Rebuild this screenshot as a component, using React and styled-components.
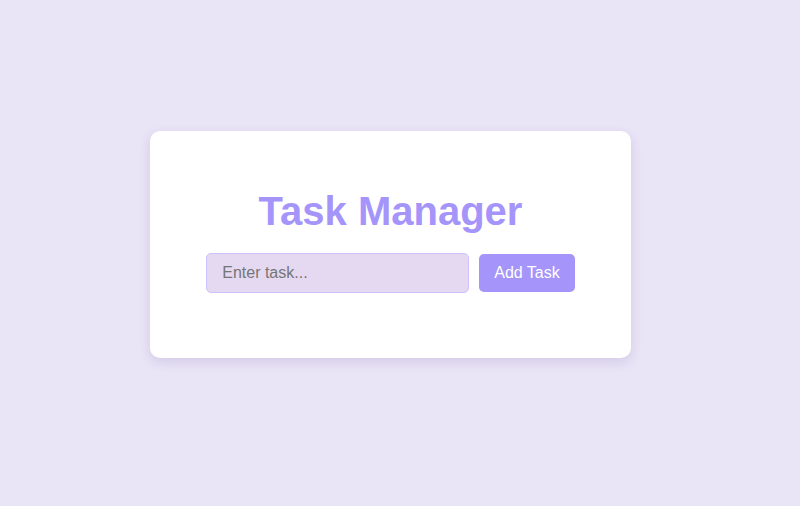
import React, { useState } from "react";
import styled, { createGlobalStyle } from "styled-components";

const GlobalStyle = createGlobalStyle`
  html, body {
    margin: 0;
    padding: 0;
    background: #e9e4f6;
    font-family: "Liberation Sans", Arial, sans-serif;
  }
  * { box-sizing: border-box; }
`;

const Page = styled.div`
  min-height: 100vh;
  display: flex;
  align-items: center;
  justify-content: center;
  padding: 0 19px 17px 0;
`;

const Card = styled.div`
  width: 481px;
  background: #ffffff;
  border-radius: 10px;
  box-shadow: 0 4px 12px rgba(80, 60, 140, 0.14);
  padding: 30px 30px 65px;
  display: flex;
  flex-direction: column;
  align-items: center;
`;

const Title = styled.h1`
  margin: 27px 0 19px;
  font-size: 40px;
  font-weight: 700;
  color: #a594f9;
  line-height: 46px;
`;

const Row = styled.div`
  display: flex;
  align-items: center;
  gap: 10px;
`;

const TaskInput = styled.input`
  width: 263px;
  height: 40px;
  padding: 10px 15px;
  border: 1px solid #cdc1ff;
  border-radius: 5px;
  background: #e5d9f2;
  font-family: "Liberation Sans", Arial, sans-serif;
  font-size: 16px;
  color: #333;
  outline: none;
  &::placeholder { color: #757575; }
`;

const AddButton = styled.button`
  height: 38px;
  padding: 10px 15px;
  border: none;
  border-radius: 5px;
  background: #a594f9;
  color: #ffffff;
  font-family: "Liberation Sans", Arial, sans-serif;
  font-size: 16px;
  line-height: 18px;
  cursor: pointer;
`;

export default function App() {
  const [value, setValue] = useState("");
  return (
    <>
      <GlobalStyle />
      <Page>
        <Card>
          <Title>Task Manager</Title>
          <Row>
            <TaskInput
              placeholder="Enter task..."
              value={value}
              onChange={(e) => setValue(e.target.value)}
            />
            <AddButton>Add Task</AddButton>
          </Row>
        </Card>
      </Page>
    </>
  );
}
